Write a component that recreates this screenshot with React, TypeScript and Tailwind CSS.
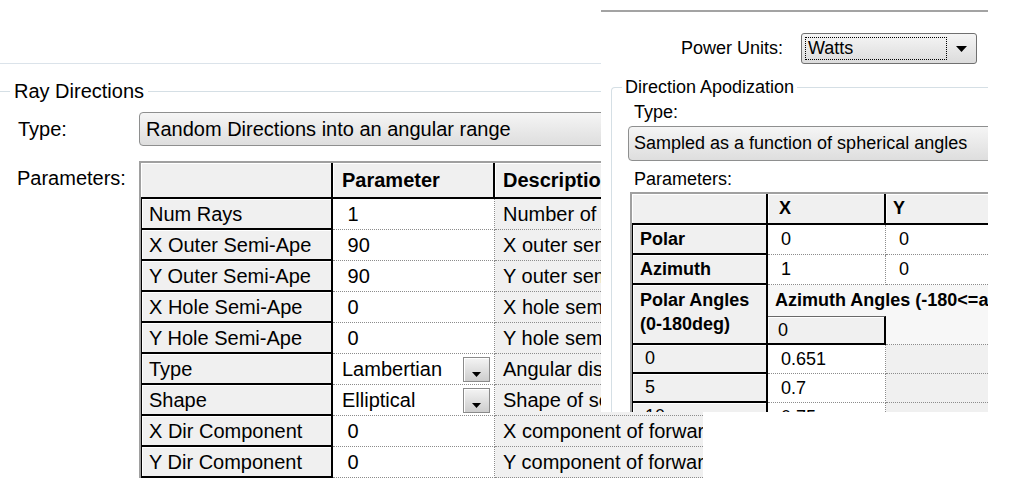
import React from 'react';

const FONT = { fontFamily: '"Liberation Sans", Arial, sans-serif' };

function DropBtn() {
  return (
    <div className="w-[27px] h-[25px] shrink-0 border border-[#8a8a8a] bg-linear-to-b from-[#f4f4f4] to-[#cdcdcd] shadow-[inset_1px_1px_0_#fff] flex items-end justify-center pb-[4px]">
      <svg width="9" height="5" viewBox="0 0 9 5">
        <path d="M0 0h9L4.5 5z" fill="#000" />
      </svg>
    </div>
  );
}

type LRow = { name: string; val: string; desc: string; drop?: boolean };

const LEFT_ROWS: LRow[] = [
  { name: 'Num Rays', val: ' 1', desc: 'Number of rays to trace' },
  { name: 'X Outer Semi-Ape', val: ' 90', desc: 'X outer semi-aperture angle' },
  { name: 'Y Outer Semi-Ape', val: ' 90', desc: 'Y outer semi-aperture angle' },
  { name: 'X Hole Semi-Ape', val: ' 0', desc: 'X hole semi-aperture angle' },
  { name: 'Y Hole Semi-Ape', val: ' 0', desc: 'Y hole semi-aperture angle' },
  { name: 'Type', val: 'Lambertian', desc: 'Angular distribution type', drop: true },
  { name: 'Shape', val: 'Elliptical', desc: 'Shape of solid angle', drop: true },
  { name: 'X Dir Component', val: ' 0', desc: 'X component of forward direction' },
  { name: 'Y Dir Component', val: ' 0', desc: 'Y component of forward direction' },
];

function LeftPanel() {
  return (
    <div className="w-[703px] h-[485px] overflow-hidden text-[20px] text-black">
      <div className="h-[63px]" />
      <div className="h-px w-[601px] bg-[#dbe3ea]" />
      {/* Group title */}
      <div className="mt-[15px] h-[24px] flex items-center w-[620px]">
        <div className="w-[10px] h-px bg-[#d5dfe5] shrink-0" />
        <span className="px-[4px] leading-[24px] whitespace-nowrap shrink-0">Ray Directions</span>
        <div className="flex-1 h-px bg-[#d5dfe5]" />
      </div>
      {/* Type row */}
      <div className="mt-[9px] flex items-center pl-[18px] w-[760px]">
        <div className="w-[121px] shrink-0 leading-[24px]">Type:</div>
        <div className="w-[600px] h-[34px] shrink-0 rounded-[4px] border border-[#8e8f8f] bg-linear-to-b from-[#f5f5f5] to-[#dedede] flex items-center pl-[6px] whitespace-nowrap">
          Random Directions into an angular range
        </div>
      </div>
      {/* Parameters row */}
      <div className="mt-[15px] flex items-start pl-[17px] w-[760px]">
        <div className="w-[122px] shrink-0 mt-[5px] leading-[24px]">Parameters:</div>
        <div className="w-[600px] shrink-0 border-t-2 border-l-2 border-[#a0a0a0]">
          <div className="flex h-[36px] bg-[#f0f0f0]">
            <div className="w-[192px] shrink-0 border-r-2 border-b-2 border-black shadow-[inset_1px_1px_0_#fff]" />
            <div className="w-[162px] shrink-0 border-r-2 border-b-2 border-black shadow-[inset_1px_1px_0_#fff] flex items-center pl-[9px] font-bold">
              Parameter
            </div>
            <div className="flex-1 min-w-0 border-b-2 border-black shadow-[inset_1px_1px_0_#fff] flex items-center pl-[8px] font-bold whitespace-nowrap overflow-hidden">
              Description
            </div>
          </div>
          {LEFT_ROWS.map((r) => (
            <div key={r.name} className="flex h-[31px]">
              <div className="w-[192px] shrink-0 border-l border-r-2 border-b-2 border-black bg-[#f0f0f0] shadow-[inset_1px_1px_0_#fff] flex items-center pl-[7px] whitespace-nowrap overflow-hidden">
                {r.name}
              </div>
              <div className="w-[162px] shrink-0 bg-white border-r border-b border-dotted border-[#8c8c8c] flex items-center justify-between whitespace-pre pl-[9px] pr-[4px]">
                <span>{r.val}</span>
                {r.drop ? <DropBtn /> : null}
              </div>
              <div className="flex-1 min-w-0 bg-[#f0f0f0] border-b border-dotted border-[#8c8c8c] flex items-center pl-[8px] whitespace-nowrap overflow-hidden">
                {r.desc}
              </div>
            </div>
          ))}
        </div>
      </div>
    </div>
  );
}

function RightPanel() {
  const hdr = 'bg-[#f0f0f0] shadow-[inset_1px_1px_0_#fff]';
  return (
    <div className="absolute left-[601px] top-0 w-[387px] h-[412px] overflow-hidden bg-white text-[18px] text-black">
      <div className="h-[10px]" />
      <div className="h-[2px] bg-[#a3a3a3]" />
      {/* Power units */}
      <div className="mt-[21px] h-[31px] flex items-center justify-end pr-[11px]">
        <span className="mr-[18px] whitespace-nowrap">Power Units:</span>
        <div className="w-[176px] shrink-0 h-[31px] rounded-[3px] border border-[#707070] bg-linear-to-b from-[#f5f5f5] to-[#dcdcdc] flex items-center">
          <div className="ml-[3px] w-[142px] shrink-0 h-[23px] border border-dotted border-black flex items-center pl-[2px]">
            Watts
          </div>
          <div className="flex-1 flex justify-center">
            <svg width="11" height="6" viewBox="0 0 11 6">
              <path d="M0 0h11L5.5 6z" fill="#000" />
            </svg>
          </div>
        </div>
      </div>
      {/* Group */}
      <fieldset className="mt-[12px] ml-[10px] w-[400px] h-[360px] border-l border-t border-[#d5dfe5] rounded-tl-[4px]">
        <legend className="ml-[10px] px-[3px] leading-[22px] whitespace-nowrap">Direction Apodization</legend>
        <div className="pl-[22px] mt-[4px] leading-[20px]">Type:</div>
        <div className="ml-[16px] mt-[4px] w-[400px] h-[35px] rounded-[4px] border border-[#8e8f8f] bg-linear-to-b from-[#f5f5f5] to-[#dedede] flex items-center pl-[5px] whitespace-nowrap">
          Sampled as a function of spherical angles
        </div>
        <div className="pl-[22px] mt-[8px] leading-[20px]">Parameters:</div>
        <div className="ml-[18px] mt-[3px] w-[400px] border-t-2 border-l-2 border-[#a0a0a0]">
          {/* header */}
          <div className="flex h-[31px]">
            <div className={`w-[136px] shrink-0 border-r-2 border-b-2 border-black ${hdr}`} />
            <div className={`w-[118px] shrink-0 border-r-2 border-b-2 border-black ${hdr} flex items-center pl-[11px] font-bold`}>X</div>
            <div className={`flex-1 min-w-0 border-b-2 border-black ${hdr} flex items-center pl-[7px] font-bold`}>Y</div>
          </div>
          {[
            ['Polar', '0', '0'],
            ['Azimuth', '1', '0'],
          ].map(([n, x, y]) => (
            <div key={n} className="flex h-[30px]">
              <div className={`w-[136px] shrink-0 border-l border-r-2 border-b-2 border-black ${hdr} flex items-center pl-[7px] font-bold`}>{n}</div>
              <div className="w-[118px] shrink-0 bg-white border-r border-b border-dotted border-[#8c8c8c] flex items-center pl-[13px]">{x}</div>
              <div className="flex-1 min-w-0 bg-white border-b border-dotted border-[#8c8c8c] flex items-center pl-[13px]">{y}</div>
            </div>
          ))}
          {/* Polar / azimuth angles block */}
          <div className="flex h-[60px]">
            <div className={`w-[136px] shrink-0 border-l border-r-2 border-b-2 border-black ${hdr} pl-[7px] pt-[3px] leading-[24px] font-bold whitespace-nowrap`}>
              <div>Polar Angles</div>
              <div>(0-180deg)</div>
            </div>
            <div className="flex-1 min-w-0 flex flex-col">
              <div className="h-[31px] bg-[#f7f7f7] flex items-center pl-[7px] font-bold whitespace-nowrap overflow-hidden">
                Azimuth Angles (-180&lt;=az&lt;=180deg)
              </div>
              <div className="flex h-[29px]">
                <div className={`w-[118px] shrink-0 border-t border-[#6a6a6a] border-r-2 border-r-black border-b-2 border-b-black ${hdr} flex items-center pl-[10px]`}>0</div>
                <div className="flex-1 min-w-0 bg-[#f7f7f7] border-b border-dotted border-[#8c8c8c]" />
              </div>
            </div>
          </div>
          {[
            ['0', '0.651'],
            ['5', '0.7'],
            ['10', '0.75'],
          ].map(([p, v]) => (
            <div key={p} className="flex h-[29px]">
              <div className={`w-[136px] shrink-0 border-l border-r-2 border-b-2 border-black ${hdr} flex items-center pl-[12px]`}>{p}</div>
              <div className="w-[118px] shrink-0 bg-white border-r border-b border-dotted border-[#8c8c8c] flex items-center pl-[13px]">{v}</div>
              <div className="flex-1 min-w-0 bg-[#f0f0f0] border-b border-dotted border-[#8c8c8c]" />
            </div>
          ))}
        </div>
      </fieldset>
    </div>
  );
}

export default function App() {
  return (
    <div className="relative w-[1010px] h-[485px] overflow-hidden bg-white" style={FONT}>
      <LeftPanel />
      <RightPanel />
    </div>
  );
}
